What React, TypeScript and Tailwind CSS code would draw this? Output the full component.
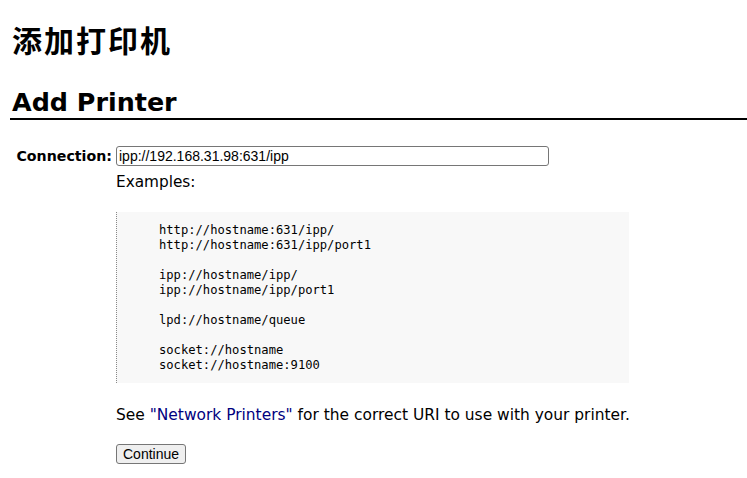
import React from "react";

export default function App() {
  return (
    <div className="min-h-[478px] w-[747px] bg-white text-black pl-[12px] pt-[20px]" style={{ fontFamily: '"DejaVu Sans", "Noto Sans CJK SC", sans-serif' }}>
      <h1 className="text-[30px] tracking-[2px] font-bold leading-[38px] m-0" style={{ fontFamily: '"Noto Sans CJK SC", sans-serif' }}>添加打印机</h1>
      <h2 className="mt-[28px] text-[25.4px] font-bold leading-[32px] border-b-2 border-black pb-[0px] -ml-[2px] pl-[2px]">Add Printer</h2>
      <div className="mt-[26px] flex">
        <div className="w-[104px] pr-[4px] text-right text-[14.2px] font-bold leading-[20px]">Connection:</div>
        <div className="flex flex-col">
          <input
            readOnly
            value="ipp://192.168.31.98:631/ipp"
            className="w-[433px] h-[20px] border border-[#767676] rounded-[3px] px-[2px] text-[14px] text-black outline-none"
            style={{ fontFamily: '"Liberation Sans", Arial, sans-serif' }}
          />
          <div className="text-[15.3px] leading-[20px] mt-[6px]">Examples:</div>
          <pre
            className="mt-[20px] w-[513px] bg-[#f8f8f8] border-l border-dotted border-[#888] pl-[42px] pt-[11px] pb-[10px] text-[12.15px] leading-[15px]"
            style={{ fontFamily: '"DejaVu Sans Mono", monospace' }}
          >{`http://hostname:631/ipp/
http://hostname:631/ipp/port1

ipp://hostname/ipp/
ipp://hostname/ipp/port1

lpd://hostname/queue

socket://hostname
socket://hostname:9100`}</pre>
          <p className="mt-[22px] text-[15.45px] leading-[20px]">
            See <a className="text-[#000080]">"Network Printers"</a> for the correct URI to use with your printer.
          </p>
          <div className="mt-[17px]">
            <button className="h-[20px] px-[6px] border border-[#767676] rounded-[3px] bg-[#efefef] text-[14px] leading-[18px]" style={{ fontFamily: '"Liberation Sans", Arial, sans-serif' }}>Continue</button>
          </div>
        </div>
      </div>
    </div>
  );
}
